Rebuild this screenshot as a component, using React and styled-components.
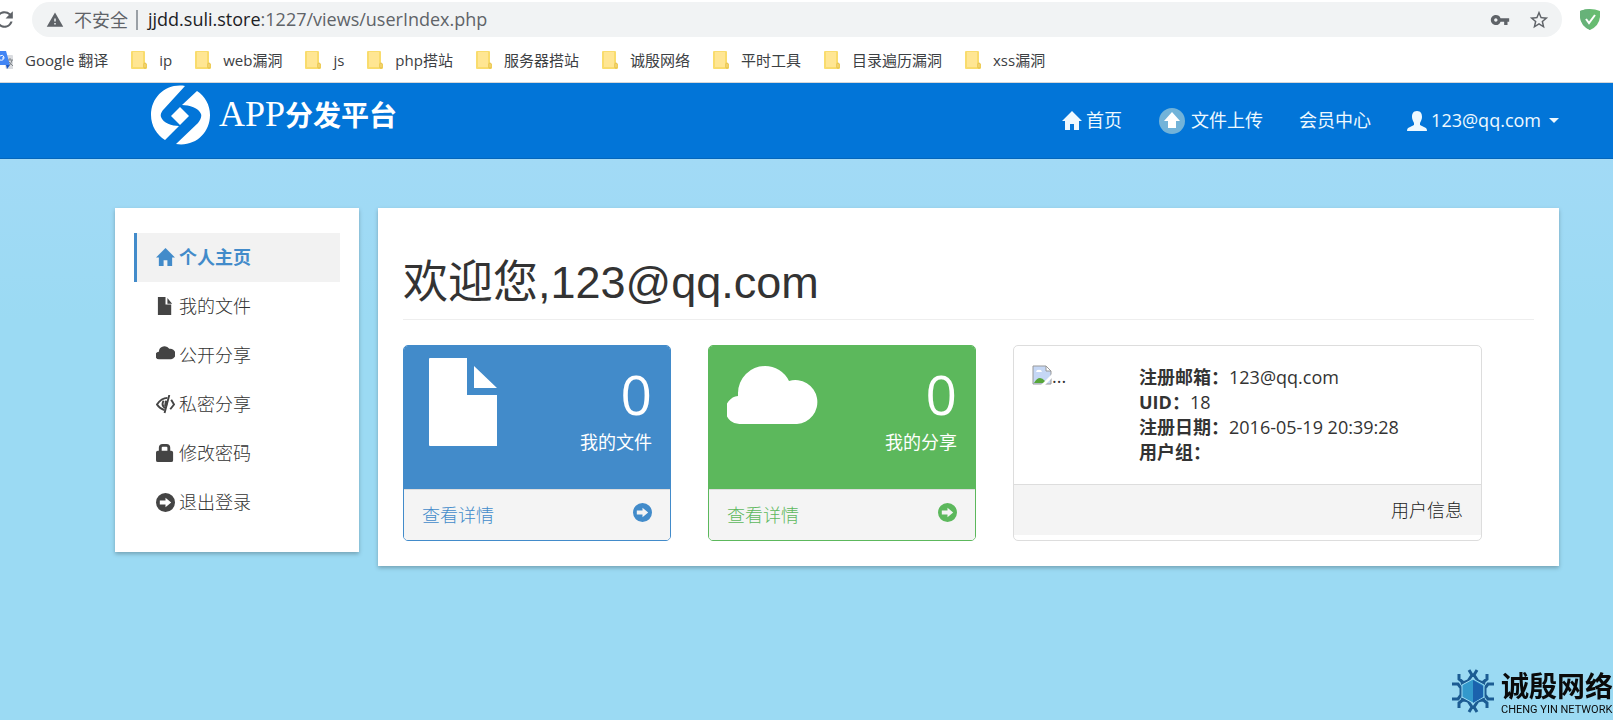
import React from 'react'
import styled, { createGlobalStyle } from 'styled-components'
import { MdRefresh, MdWarning, MdVpnKey, MdStarBorder } from 'react-icons/md'

const GlobalStyle = createGlobalStyle`
* {
    box-sizing: border-box;
}
body {
    margin: 0;
    font-family: "Open Sans", "Noto Sans CJK SC", sans-serif;
    font-size: 18px;
    font-weight: 300;
    line-height: 25px;
    color: #222;
    background-color: #9bdaf3;
}
a {
    text-decoration: none;
}
`

const Page = styled.div`
min-height: 100vh;
overflow-x: hidden;
background: linear-gradient(#a2daf6 160px, #9bdaf3 320px);
`

/* browser bars */
const Browser = styled.div`
background-color: #fff;
border-bottom: 1px solid #d5d7da;
font-weight: 400;
`
const AddressRow = styled.div`
display: flex;
align-items: center;
height: 38px;
padding: 2px 13px 1px 0;
`
const ReloadButton = styled.button`
display: flex;
width: 32px;
padding: 0;
border: 0;
background: none;
color: #5f6368;
svg {
    flex: none;
    margin-left: -8px;
}
`
const Omnibox = styled.div`
display: flex;
align-items: center;
flex-grow: 1;
height: 35px;
padding: 0 12px 0 14px;
border-radius: 18px;
background-color: #f1f3f4;
color: #5f6368;
`
const Insecure = styled.span`
margin-left: 10px;
padding-right: 8px;
border-right: 2px solid #9aa0a6;
line-height: 20px;
`
const Url = styled.span`
flex-grow: 1;
margin-left: 10px;
b {
    font-weight: 400;
    color: #202124;
}
`
const PlainButton = styled.button`
display: flex;
padding: 0;
margin-left: 18px;
border: 0;
background: none;
color: #5f6368;
`
const Bookmarks = styled.nav`
display: flex;
align-items: center;
gap: 23px;
height: 44px;
`
const Bookmark = styled.a`
display: flex;
align-items: center;
gap: 12px;
font-size: 15px;
white-space: nowrap;
color: #3c4043;
`

/* site header */
const Header = styled.header`
display: flex;
justify-content: space-between;
height: 76px;
padding: 0 54px 0 151px;
background-color: #0275d8;
border-bottom: 1px solid #0466bb;
`
const Brand = styled.a`
display: flex;
align-items: center;
gap: 9px;
height: 64px;
color: #fff;
`
const BrandText = styled.span`
font-family: "Liberation Serif", "Noto Sans CJK SC", serif;
font-size: 28px;
font-weight: 700;
line-height: 36px;
white-space: nowrap;
`
const BrandLatin = styled.span`
font-size: 36px;
font-weight: 400;
`
const Menu = styled.nav`
display: flex;
align-items: center;
gap: 36px;
`
const MenuLink = styled.a`
display: flex;
align-items: center;
gap: 4px;
font-weight: 400;
white-space: nowrap;
color: #eef9ff;
`
const Caret = styled.span`
margin-left: 4px;
border-top: 5px solid #eef9ff;
border-left: 5px solid transparent;
border-right: 5px solid transparent;
`

/* content */
const Content = styled.div`
display: flex;
align-items: flex-start;
gap: 19px;
padding: 49px 54px 0 115px;
`
const Box = styled.div`
background-color: #fff;
box-shadow: 0 2px 4px rgba(0, 0, 0, .25);
`
const Sidebar = styled(Box)`
flex: none;
width: 244px;
padding: 25px 19px;
`
const SideLink = styled.a`
display: flex;
align-items: center;
gap: 4px;
height: 49px;
padding-left: 19px;
border-left: 3px solid ${p => p.$active ? '#428bca' : 'transparent'};
background-color: ${p => p.$active ? '#f2f2f2' : 'transparent'};
color: ${p => p.$active ? '#428bca' : '#333'};
font-weight: ${p => p.$active ? 700 : 300};
svg {
    color: ${p => p.$active ? '#428bca' : '#444'};
}
`
const Main = styled(Box).attrs({ as: 'main' })`
flex-grow: 1;
padding: 25px;
`
const Title = styled.h1`
margin: 25px 0;
padding-bottom: 11px;
border-bottom: 1px solid #eee;
font-family: "Liberation Sans", "Noto Sans CJK SC", sans-serif;
font-size: 45px;
font-weight: 400;
line-height: 50px;
color: #333;
`
const Cards = styled.div`
display: grid;
grid-template-columns: 4fr 4fr 7fr;
gap: 37px;
padding-right: 52px;
`
const Card = styled.section`
display: flex;
flex-direction: column;
height: 196px;
overflow: hidden;
border: 1px solid ${p => p.$color || '#ddd'};
border-radius: 5px;
`
const StatBody = styled.div`
display: flex;
justify-content: space-between;
flex-grow: 1;
padding: 12px 18px;
background-color: ${p => p.$color};
color: #fff;
`
const Stat = styled.div`
text-align: right;
font-weight: 400;
`
const Count = styled.div`
font-size: 55px;
line-height: 72px;
`
const CardFooter = styled.div`
display: flex;
align-items: center;
justify-content: ${p => p.$end ? 'flex-end' : 'space-between'};
height: 51px;
padding: 0 18px;
border-top: 1px solid #ddd;
background-color: #f4f4f4;
`
const FooterLink = styled(CardFooter).attrs({ as: 'a' })`
color: ${p => p.$color};
svg {
    margin-bottom: 6px;
}
`
const UserBody = styled.div`
display: flex;
flex-grow: 1;
padding: 19px 18px;
font-weight: 400;
color: #333;
`
const Avatar = styled.div`
display: flex;
flex: none;
width: 107px;
line-height: 23px;
`
const UserCard = styled(Card)`
padding-bottom: 5px;
`
const Info = styled.dl`
margin: 0;
div {
    display: flex;
}
dt {
    font-weight: 700;
}
dd {
    margin: 0;
}
`

const Watermark = styled.div`
position: fixed;
right: 0;
bottom: 4px;
display: flex;
align-items: flex-start;
gap: 7px;
color: #0a0a0a;
white-space: nowrap;
`
const WatermarkName = styled.div`
font-size: 28px;
font-weight: 700;
line-height: 35px;
`
const WatermarkLatin = styled.div`
font-family: Roboto, sans-serif;
font-size: 11px;
font-weight: 400;
line-height: 12px;
`

const glyphs = {
    home: <path d="M10 0 20 10h-3v9h-5v-6H8v6H3v-9H0z" />,
    file: <path d="M2 0h8v8h6v11H2zM12 1l5 6h-5z" />,
    cloud: <path d="M4 14a4 4 0 0 1-1-8A6 6 0 0 1 14 3a5 5 0 1 1 2 11z" />,
    lock: <path fillRule="evenodd" d="M3 7V4a4 4 0 0 1 4-4h4a4 4 0 0 1 4 4v3h1q2 0 2 2v8q0 2-2 2H2q-2 0-2-2V9q0-2 2-2zm3 0h6V4q0-1-1-1H7Q6 3 6 4z" />,
    arrow: <path fillRule="evenodd" d="M10 0a10 10 0 1 1 0 20 10 10 0 0 1 0-20M4 8v4h6v3l6-5-6-5v3z" />,
    user: <path d="M10 0c4 0 5 3 5 6 0 2-1 4-2 6v2l6 3q1 1 1 3H0q0-2 1-3l6-3v-2C6 10 5 8 5 6c0-3 1-6 5-6" />,
    eye: (
        <g fill="none" stroke="currentColor" strokeWidth="2">
            <path d="M12 3C7 3 3 7 1 10c2 3 5 5 8 6M16 5l3 5-4 5" />
            <path d="M8 6q-3 5 2 8M14 0 9 19" />
            <path d="m11 6-1 6" strokeWidth="3" />
        </g>
    ),
}

function Glyph({ name, size = 20 }) {
    return (
        <svg width={size} height={size} viewBox="0 0 20 20" fill="currentColor" aria-hidden="true">
            {glyphs[name]}
        </svg>
    )
}

function Folder() {
    return (
        <svg width="16" height="18" viewBox="0 0 16 18" aria-hidden="true">
            <path d="M1 0h12q1 0 1 1v11l2 1v4q0 1-1 1H1q-1 0-1-1V1q0-1 1-1" fill="#f9dc6d" />
            <path d="M2 1h10v15H2z" fill="#ffe693" />
            <path d="M13 17v-4q0-1 1-1t1 1v4z" fill="#ffe693" stroke="#e3bd45" />
        </svg>
    )
}

function Translate() {
    return (
        <svg width="13" height="19" viewBox="0 0 13 19" aria-hidden="true">
            <path d="M2 4h10q1 0 1 1v13H6z" fill="#dadce0" />
            <path d="M0 0h6l4 14H0z" fill="#4285f4" />
            <path d="m6 14 4 0-3 4z" fill="#1a56c4" />
            <path d="M0 5q3-2 4 1 0 4-4 3M2 7h2" fill="none" stroke="#fff" />
            <path d="M8 9h5M10 7v2m2 0q-1 4-3 6m0-4 4 4" fill="none" stroke="#80868b" />
        </svg>
    )
}

function Shield() {
    return (
        <svg width="20" height="21" viewBox="0 0 20 21" aria-hidden="true">
            <path d="M10 0q5 0 10 2v6q-1 9-10 13Q1 17 0 8V2q5-2 10-2" fill="#68bc71" />
            <path d="M10 0v21Q1 17 0 8V2q5-2 10-2" fill="#67b279" />
            <path d="m6 10 3 4 6-8" fill="none" stroke="#fff" strokeWidth="2" />
        </svg>
    )
}

function BrandMark() {
    return (
        <svg width="59" height="60" viewBox="0 0 59 60" fill="currentColor" aria-hidden="true">
            <path d="M34 1C15-2 0 12 0 30c0 11 6 20 14 25l14-14c-7 0-16-3-18-9-1-3 1-6 3-8z" />
            <path d="M25 59c19 3 34-11 34-29 0-10-5-19-13-24L31 20c7 0 17 3 19 9 1 3-1 6-3 9z" />
            <path d="m29 22 9 9-9 9-9-9z" />
        </svg>
    )
}

function Upload() {
    return (
        <svg width="29" height="27" viewBox="0 0 29 27" aria-hidden="true">
            <circle cx="14" cy="14" r="13" fill="#72b3d9" />
            <path d="m14 5 8 9h-4v7h-8v-7H6z" fill="#fff" />
        </svg>
    )
}

function BigFile() {
    return (
        <svg width="80" height="90" viewBox="0 0 80 90" fill="currentColor" aria-hidden="true">
            <path d="M8 0h37v37h30v51H8q-1 0-1-1V1q0-1 1-1M52 8l23 22H52z" />
        </svg>
    )
}

function BigCloud() {
    return (
        <svg width="92" height="90" viewBox="0 0 92 90" fill="currentColor" aria-hidden="true">
            <path d="M14 66A14 14 0 0 1 11 38V35A27 27 0 0 1 38 8 27 27 0 0 1 62 23 22 22 0 1 1 70 66z" />
        </svg>
    )
}

function BrokenImage() {
    return (
        <svg width="20" height="20" viewBox="0 0 20 20" aria-hidden="true">
            <path d="M1 1h13l5 5v13H1z" fill="#c5d7f5" stroke="#999" strokeWidth="1" />
            <path d="M14 1v5h5z" fill="#fff" stroke="#999" />
            <path d="M4 7q1-3 3-2 2-1 3 2z" fill="#fff" />
            <path d="M2 18q5-9 11-2v2z" fill="#57a639" />
            <path d="M9 20 20 9v4l-7 7z" fill="#fff" />
        </svg>
    )
}

function Bug() {
    return (
        <svg width="42" height="44" viewBox="0 0 42 44" aria-hidden="true">
            <g fill="none" stroke="#1c5c93" strokeWidth="3">
                <path d="M17 1l3 5-4 6-7 3M25 1l-3 5 4 6 7 3M7 5v5l6 5M35 5v5l-6 5" />
                <path d="M0 15h6l3 4v7l-3 4H0M42 15h-6l-3 4v7l3 4h6" />
                <path d="M17 43l3-5-4-6-7-2M25 43l-3-5 4-6 7-2M7 39v-5l6-5M35 39v-5l-6-5" />
            </g>
            <path d="m21 10 11 6v12l-11 6-11-6V16z" fill="#3399cc" stroke="#9bdaf3" />
            <path d="m21 11 10 6v11l-10 6z" fill="#1b62ad" />
        </svg>
    )
}

const folders = ['ip', 'web漏洞', 'js', 'php搭站', '服务器搭站', '诚殷网络', '平时工具', '目录遍历漏洞', 'xss漏洞']

const sideItems = [
    ['home', '个人主页'],
    ['file', '我的文件'],
    ['cloud', '公开分享'],
    ['eye', '私密分享'],
    ['lock', '修改密码'],
    ['arrow', '退出登录'],
]

const userInfo = [
    ['注册邮箱：', '123@qq.com'],
    ['UID：', '18'],
    ['注册日期：', '2016-05-19 20:39:28'],
    ['用户组：', ''],
]

function StatCard({ color, icon, count, label }) {
    return (
        <Card $color={color}>
            <StatBody $color={color}>
                {icon}
                <Stat>
                    <Count>{count}</Count>
                    <div>{label}</div>
                </Stat>
            </StatBody>
            <FooterLink href="#" $color={color}>
                <span>查看详情</span>
                <Glyph name="arrow" size={19} />
            </FooterLink>
        </Card>
    )
}

function App() {
    return (
        <Page>
            <GlobalStyle />
            <Browser>
                <AddressRow>
                    <ReloadButton aria-label="Reload"><MdRefresh size={25} /></ReloadButton>
                    <Omnibox>
                        <MdWarning size={18} />
                        <Insecure>不安全</Insecure>
                        <Url><b>jjdd.suli.store</b>:1227/views/userIndex.php</Url>
                        <PlainButton aria-label="Passwords"><MdVpnKey size={20} /></PlainButton>
                        <PlainButton aria-label="Bookmark"><MdStarBorder size={22} /></PlainButton>
                    </Omnibox>
                    <PlainButton aria-label="AdGuard"><Shield /></PlainButton>
                </AddressRow>
                <Bookmarks>
                    <Bookmark href="#"><Translate />Google 翻译</Bookmark>
                    {folders.map(name => (
                        <Bookmark href="#" key={name}><Folder />{name}</Bookmark>
                    ))}
                </Bookmarks>
            </Browser>

            <Header>
                <Brand href="#">
                    <BrandMark />
                    <BrandText><BrandLatin>APP</BrandLatin>分发平台</BrandText>
                </Brand>
                <Menu>
                    <MenuLink href="#"><Glyph name="home" />首页</MenuLink>
                    <MenuLink href="#"><Upload />文件上传</MenuLink>
                    <MenuLink href="#">会员中心</MenuLink>
                    <MenuLink href="#"><Glyph name="user" />123@qq.com<Caret /></MenuLink>
                </Menu>
            </Header>

            <Content>
                <Sidebar as="nav">
                    {sideItems.map(([icon, label], i) => (
                        <SideLink href="#" key={label} $active={i === 0}>
                            <Glyph name={icon} size={19} />{label}
                        </SideLink>
                    ))}
                </Sidebar>
                <Main>
                    <Title>欢迎您,123@qq.com</Title>
                    <Cards>
                        <StatCard color="#428bca" icon={<BigFile />} count="0" label="我的文件" />
                        <StatCard color="#5cb85c" icon={<BigCloud />} count="0" label="我的分享" />
                        <UserCard>
                            <UserBody>
                                <Avatar><BrokenImage />...</Avatar>
                                <Info>
                                    {userInfo.map(([label, value]) => (
                                        <div key={label}>
                                            <dt>{label}</dt>
                                            <dd>{value}</dd>
                                        </div>
                                    ))}
                                </Info>
                            </UserBody>
                            <CardFooter $end>用户信息</CardFooter>
                        </UserCard>
                    </Cards>
                </Main>
            </Content>

            <Watermark>
                <Bug />
                <div>
                    <WatermarkName>诚殷网络</WatermarkName>
                    <WatermarkLatin>CHENG YIN NETWORK</WatermarkLatin>
                </div>
            </Watermark>
        </Page>
    )
}

export default App
